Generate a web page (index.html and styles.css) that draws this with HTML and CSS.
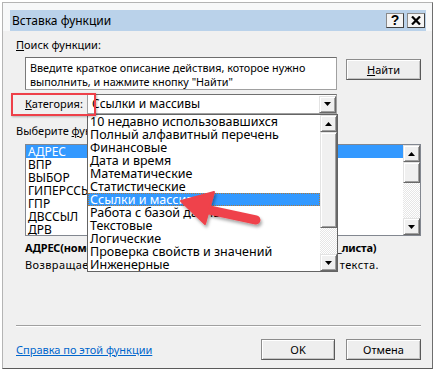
FILE: index.html
```html
<!DOCTYPE html>
<html lang="ru">
  <head>
    <meta charset="utf-8" />
    <title>Вставка функции</title>
    <link rel="stylesheet" href="styles.css">
  </head>
  <body>
    <div class="window">
      <div class="frame-top">
        <div class="titlebar">
          <span class="title">Вставка функции</span>
          <span class="cap-btn">?</span>
          <span class="cap-btn">
            <svg width="10" height="9" viewBox="0 0 10 9"><path d="M1 0.5 L9 8.5 M9 0.5 L1 8.5" stroke="#000" stroke-width="2.2"/></svg>
          </span>
        </div>
      </div>

      <div class="content">
        <div class="label"><u>П</u>оиск функции:</div>
        <div class="search-row">
          <div class="search-box">Введите краткое описание действия, которое нужно выполнить, и нажмите кнопку "Найти"</div>
          <span class="btn find"><u>Н</u>айти</span>
        </div>

        <div class="cat-row">
          <span class="cat-label"><u>К</u>атегория:</span>
          <div class="combo">
            <span class="combo-text">Ссылки и массивы</span>
            <span class="sb-btn combo-btn"><svg width="7" height="4" viewBox="0 0 7 4"><path d="M0 0 H7 L3.5 4 Z"/></svg></span>

            <div class="dropdown">
              <ul class="items">
                <li>10 недавно использовавшихся</li>
                <li>Полный алфавитный перечень</li>
                <li>Финансовые</li>
                <li>Дата и время</li>
                <li>Математические</li>
                <li>Статистические</li>
                <li class="selected focus">Ссылки и массивы</li>
                <li>Работа с базой данных</li>
                <li>Текстовые</li>
                <li>Логические</li>
                <li>Проверка свойств и значений</li>
                <li>Инженерные</li>
              </ul>
              <div class="scrollbar">
                <span class="sb-btn"><svg width="7" height="4" viewBox="0 0 7 4"><path d="M0 4 H7 L3.5 0 Z"/></svg></span>
                <span class="sb-btn thumb long"></span>
                <span class="track"></span>
                <span class="sb-btn"><svg width="7" height="4" viewBox="0 0 7 4"><path d="M0 0 H7 L3.5 4 Z"/></svg></span>
              </div>
            </div>
          </div>
        </div>

        <div class="label fn-label">Выберите <u>ф</u>ункцию:</div>
        <div class="fn-list">
          <ul class="items">
            <li class="selected">АДРЕС</li>
            <li>ВПР</li>
            <li>ВЫБОР</li>
            <li>ГИПЕРССЫЛКА</li>
            <li>ГПР</li>
            <li>ДВССЫЛ</li>
            <li>ДРВ</li>
          </ul>
          <div class="scrollbar">
            <span class="sb-btn"><svg width="7" height="4" viewBox="0 0 7 4"><path d="M0 4 H7 L3.5 0 Z"/></svg></span>
            <span class="sb-btn thumb short"></span>
            <span class="track"></span>
            <span class="sb-btn"><svg width="7" height="4" viewBox="0 0 7 4"><path d="M0 0 H7 L3.5 4 Z"/></svg></span>
          </div>
        </div>

        <div class="sig">АДРЕС(номер_строки;номер_столбца;тип_ссылки;a1;имя_листа)</div>
        <div class="desc">Возвращает ссылку на отдельную ячейку листа в виде текста.</div>

        <div class="sep"></div>
        <div class="footer">
          <a class="help" href="#help">Справка по этой функции</a>
          <span class="btn ok">OK</span>
          <span class="btn cancel">Отмена</span>
        </div>
      </div>

      <!-- annotation on top of the screenshot -->
      <div class="callout"></div>
      <svg class="arrow" width="439" height="378" viewBox="0 0 439 378">
        <defs>
          <filter id="shadow" x="-20%" y="-20%" width="140%" height="160%">
            <feDropShadow dx="1.5" dy="2.5" stdDeviation="1.5" flood-color="#000" flood-opacity="0.35"/>
          </filter>
        </defs>
        <g filter="url(#shadow)" fill="#ef434b" stroke="#ef434b">
          <line x1="200" y1="208" x2="256" y2="220" stroke-width="9" stroke-linecap="round"/>
          <polygon points="181,201 214,192 205,224" stroke-width="2" stroke-linejoin="round"/>
        </g>
      </svg>
    </div>
  </body>
</html>
```

FILE: styles.css
```css
html,
body {
  margin: 0;
}

body {
  background-color: #fff;
  color: #000;
  font: 11px / 14px "Noto Sans", "DejaVu Sans", sans-serif;
  padding: 2px;
}

* {
  box-sizing: border-box;
}

ul {
  list-style-type: none;
  margin: 0;
  padding: 0;
}

.window {
  position: relative;
  width: 431px;
  height: 367px;
  border: 1px solid #b4b4b4;
  border-right-color: #6e6e6e;
  border-bottom-color: #5a5a5a;
  background-color: #f0f0f0;
  display: flex;
  flex-direction: column;
}

.frame-top {
  padding: 7px 6px 0 7px;
  background-color: #f7f8f9;
}

.titlebar {
  height: 21px;
  display: flex;
  align-items: center;
  background-color: #bad2ea;
  padding: 0 1px 0 2px;
}

.title {
  flex-grow: 1;
  font-size: 12px;
}

.cap-btn {
  width: 18px;
  height: 15px;
  margin-left: 3px;
  display: flex;
  align-items: center;
  justify-content: center;
  background-color: #f4f4f4;
  border: 1px solid #8a8a8a;
  border-right-color: #404040;
  border-bottom-color: #404040;
  font: bold 14px / 13px "Liberation Sans", Arial, sans-serif;
}

.content {
  flex-grow: 1;
  display: flex;
  flex-direction: column;
  padding: 7px 11px 8px 13px;
}

.search-row {
  display: flex;
  align-items: flex-start;
  margin-top: 5px;
  padding-left: 9px;
  gap: 9px;
}

.search-box {
  width: 312px;
  height: 33px;
  background-color: #fff;
  border: 1px solid #a0a0a0;
  border-top-color: #6d6d6d;
  border-left-color: #7a7a7a;
  padding: 3px 4px;
  font-size: 10.8px;
}

.btn {
  height: 21px;
  display: flex;
  align-items: center;
  justify-content: center;
  background-color: #eeeeee;
  border: 1px solid #8c8c8c;
  border-right-color: #5a5a5a;
  border-bottom-color: #5a5a5a;
  box-shadow: inset 1px 1px #fff, inset -1px -1px #c4c4c4;
}

.find {
  width: 75px;
  margin-top: 2px;
}

.cat-row {
  display: flex;
  align-items: center;
  margin-top: 4px;
  padding-left: 9px;
  height: 20px;
}

.cat-label {
  width: 62px;
}

.combo {
  position: relative;
  width: 250px;
  height: 20px;
  display: flex;
  align-items: center;
  background-color: #fff;
  border: 1px solid #a0a0a0;
  border-top-color: #707070;
}

.combo-text {
  flex-grow: 1;
  padding-left: 4px;
  font-size: 12px;
}

.combo-btn {
  height: 16px;
}

.sb-btn {
  width: 17px;
  height: 17px;
  display: flex;
  align-items: center;
  justify-content: center;
  background-color: #f0f0f0;
  border: 1px solid #e3e3e3;
  border-right-color: #696969;
  border-bottom-color: #696969;
  box-shadow: inset 1px 1px #fff, inset -1px -1px #a0a0a0;
  flex-shrink: 0;
}

.thumb.long {
  height: 96px;
}

.thumb.short {
  height: 21px;
}

.track {
  flex-grow: 1;
  background-color: #fff;
  background-image: repeating-conic-gradient(#e6e6e6 0 25%, #fff 0 50%);
  background-size: 2px 2px;
}

.scrollbar {
  width: 17px;
  display: flex;
  flex-direction: column;
}

.dropdown {
  position: absolute;
  left: -1px;
  top: 19px;
  width: 251px;
  height: 158px;
  background-color: #fff;
  border: 1px solid #646464;
  display: flex;
  z-index: 2;
}

.items {
  flex-grow: 1;
  line-height: 13px;
  white-space: nowrap;
  overflow: hidden;
}

.items li {
  height: 13px;
  padding-left: 2px;
}

.dropdown .items {
  font-size: 12.5px;
}

.fn-list .items {
  font-size: 12px;
}

.selected {
  background-color: #3399ff;
  color: #fff;
}

.dropdown .focus {
  outline: 1px dotted #b07a3a;
  outline-offset: -1px;
}

.fn-label {
  margin-top: 10px;
}

.fn-list {
  margin-top: 6px;
  margin-left: 9px;
  width: 396px;
  height: 92px;
  background-color: #fff;
  border: 1px solid #828790;
  display: flex;
}

.sig {
  margin-top: 4px;
  margin-left: 9px;
  line-height: 16px;
  font-weight: bold;
  letter-spacing: -0.2px;
  white-space: nowrap;
}

.desc {
  margin-top: 1px;
  margin-left: 9px;
  line-height: 16px;
  letter-spacing: 0.4px;
  white-space: nowrap;
}

.sep {
  margin-top: auto;
  border-top: 1px solid #a0a0a0;
  border-bottom: 1px solid #fff;
}

.footer {
  display: flex;
  align-items: center;
  margin-top: 12px;
}

.help {
  color: #0066cc;
  flex-grow: 1;
}

.ok {
  width: 74px;
}

.cancel {
  width: 75px;
  margin-left: 11px;
}

.callout {
  position: absolute;
  left: 8px;
  top: 90px;
  width: 85px;
  height: 23px;
  border: 2px solid #ee4049;
  box-shadow: 1px 1px 2px rgba(0, 0, 0, 0.25);
  z-index: 3;
}

.arrow {
  position: absolute;
  left: -3px;
  top: -3px;
  z-index: 3;
  pointer-events: none;
}
```
